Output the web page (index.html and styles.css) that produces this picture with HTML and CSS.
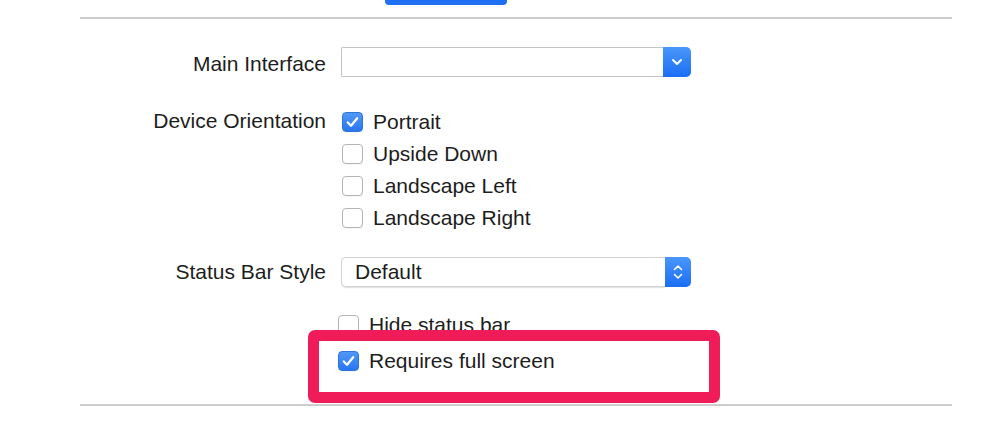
FILE: index.html
```html
<!DOCTYPE html>
<html>
<head>
<meta charset="utf-8">
<link rel="stylesheet" href="styles.css">
</head>
<body>
<div class="page">
  <div class="top-button"></div>
  <div class="rule"></div>

  <div class="row row-main">
    <div class="label label-main">Main Interface</div>
    <div class="popup popup-main">
      <div class="popup-field"></div>
      <div class="popup-arrow">
        <svg width="12" height="8" viewBox="0 0 12 8"><path d="M2 2 L6 6 L10 2" fill="none" stroke="#fff" stroke-width="2" stroke-linecap="round" stroke-linejoin="round"/></svg>
      </div>
    </div>
  </div>

  <div class="row row-orient">
    <div class="label">Device Orientation</div>
    <div class="checks checks-orient">
      <div class="check-row"><span class="box checked"><svg width="21" height="20" viewBox="0 0 21 20"><path d="M5.8 10.4 L9 13.8 L15.2 6.2" fill="none" stroke="#fff" stroke-width="2.2" stroke-linecap="round" stroke-linejoin="round"/></svg></span><span class="check-text">Portrait</span></div>
      <div class="check-row"><span class="box"></span><span class="check-text">Upside Down</span></div>
      <div class="check-row"><span class="box"></span><span class="check-text">Landscape Left</span></div>
      <div class="check-row"><span class="box"></span><span class="check-text">Landscape Right</span></div>
    </div>
  </div>

  <div class="row row-status">
    <div class="label">Status Bar Style</div>
    <div class="popup popup-status">
      <div class="popup-field">Default</div>
      <div class="popup-arrow">
        <svg width="12" height="20" viewBox="0 0 12 20"><path d="M2.5 7.5 L6 4 L9.5 7.5 M2.5 12.5 L6 16 L9.5 12.5" fill="none" stroke="#fff" stroke-width="1.6" stroke-linecap="round" stroke-linejoin="round"/></svg>
      </div>
    </div>
  </div>

  <div class="row row-bottom">
    <div class="label"></div>
    <div class="checks checks-bottom">
      <div class="check-row"><span class="box"></span><span class="check-text">Hide status bar</span></div>
      <div class="check-row row-gap"><span class="box checked"><svg width="21" height="20" viewBox="0 0 21 20"><path d="M5.8 10.4 L9 13.8 L15.2 6.2" fill="none" stroke="#fff" stroke-width="2.2" stroke-linecap="round" stroke-linejoin="round"/></svg></span><span class="check-text">Requires full screen</span></div>
      <div class="highlight"></div>
    </div>
  </div>

  <div class="rule rule-bottom"></div>
</div>
</body>
</html>
```

FILE: styles.css
```css
html, body {
  margin: 0;
  padding: 0;
  background: #ffffff;
}

.page {
  width: 998px;
  height: 442px;
  overflow: hidden;
  font-family: "Liberation Sans", Arial, sans-serif;
  font-size: 21px;
  color: #1d1d1d;
}

.top-button {
  margin-left: 385px;
  width: 122px;
  height: 5px;
  background: #1f6ff5;
  border-radius: 0 0 4px 4px;
}

.rule {
  margin-top: 12px;
  margin-left: 80px;
  width: 872px;
  height: 2px;
  background: #cdcdcd;
}

.rule-bottom {
  margin-top: 27px;
}

.row {
  display: flex;
  gap: 12px;
}

.label {
  width: 326px;
  flex: none;
  text-align: right;
  line-height: 30px;
}

.label-main {
  padding-top: 2px;
  box-sizing: border-box;
}

.row-main { margin-top: 28px; }
.row-orient { margin-top: 27px; }
.row-status { margin-top: 23px; }
.row-bottom { margin-top: 22px; }

.popup {
  display: flex;
  width: 350px;
  height: 30px;
  margin-left: 3px;
}

.popup-field {
  flex: 1;
  box-sizing: border-box;
  background: #fff;
  border: 1px solid #c4c4c4;
  border-right: none;
  border-radius: 2px 0 0 2px;
  padding-left: 13px;
  line-height: 28px;
}

.popup-status .popup-field {
  border-color: #d2d2d2;
  border-radius: 5px 0 0 5px;
  box-shadow: 0 1px 1px rgba(0, 0, 0, 0.12);
}

.popup-arrow {
  width: 28px;
  flex: none;
  display: flex;
  align-items: center;
  justify-content: center;
  background: linear-gradient(#4a97fa, #1a6ef4);
  border-radius: 0 5px 5px 0;
}

.popup-status .popup-arrow {
  width: 26px;
}

.checks {
  display: flex;
  flex-direction: column;
}

.checks-orient {
  margin-left: 4px;
}

.checks-bottom {
  position: relative;
}

.check-row {
  display: flex;
  align-items: center;
  gap: 10px;
  height: 32px;
}

.row-gap {
  margin-top: 4px;
}

.check-text {
  line-height: 28px;
  white-space: nowrap;
}

.box {
  width: 21px;
  height: 20px;
  flex: none;
  box-sizing: border-box;
  border: 1px solid #b4b4b4;
  border-radius: 4px;
  background: #fff;
  box-shadow: 0 1px 0 rgba(0, 0, 0, 0.04);
  display: flex;
  align-items: center;
  justify-content: center;
}

.box svg {
  display: block;
  margin: -1px;
}

.box.checked {
  border-color: #2f73dc;
  background: linear-gradient(#5198f7, #2a76ef);
}

.highlight {
  position: absolute;
  left: -30px;
  top: 21px;
  width: 412px;
  height: 73px;
  box-sizing: border-box;
  border: 11px solid #f01c5a;
  border-radius: 7px;
}
```
